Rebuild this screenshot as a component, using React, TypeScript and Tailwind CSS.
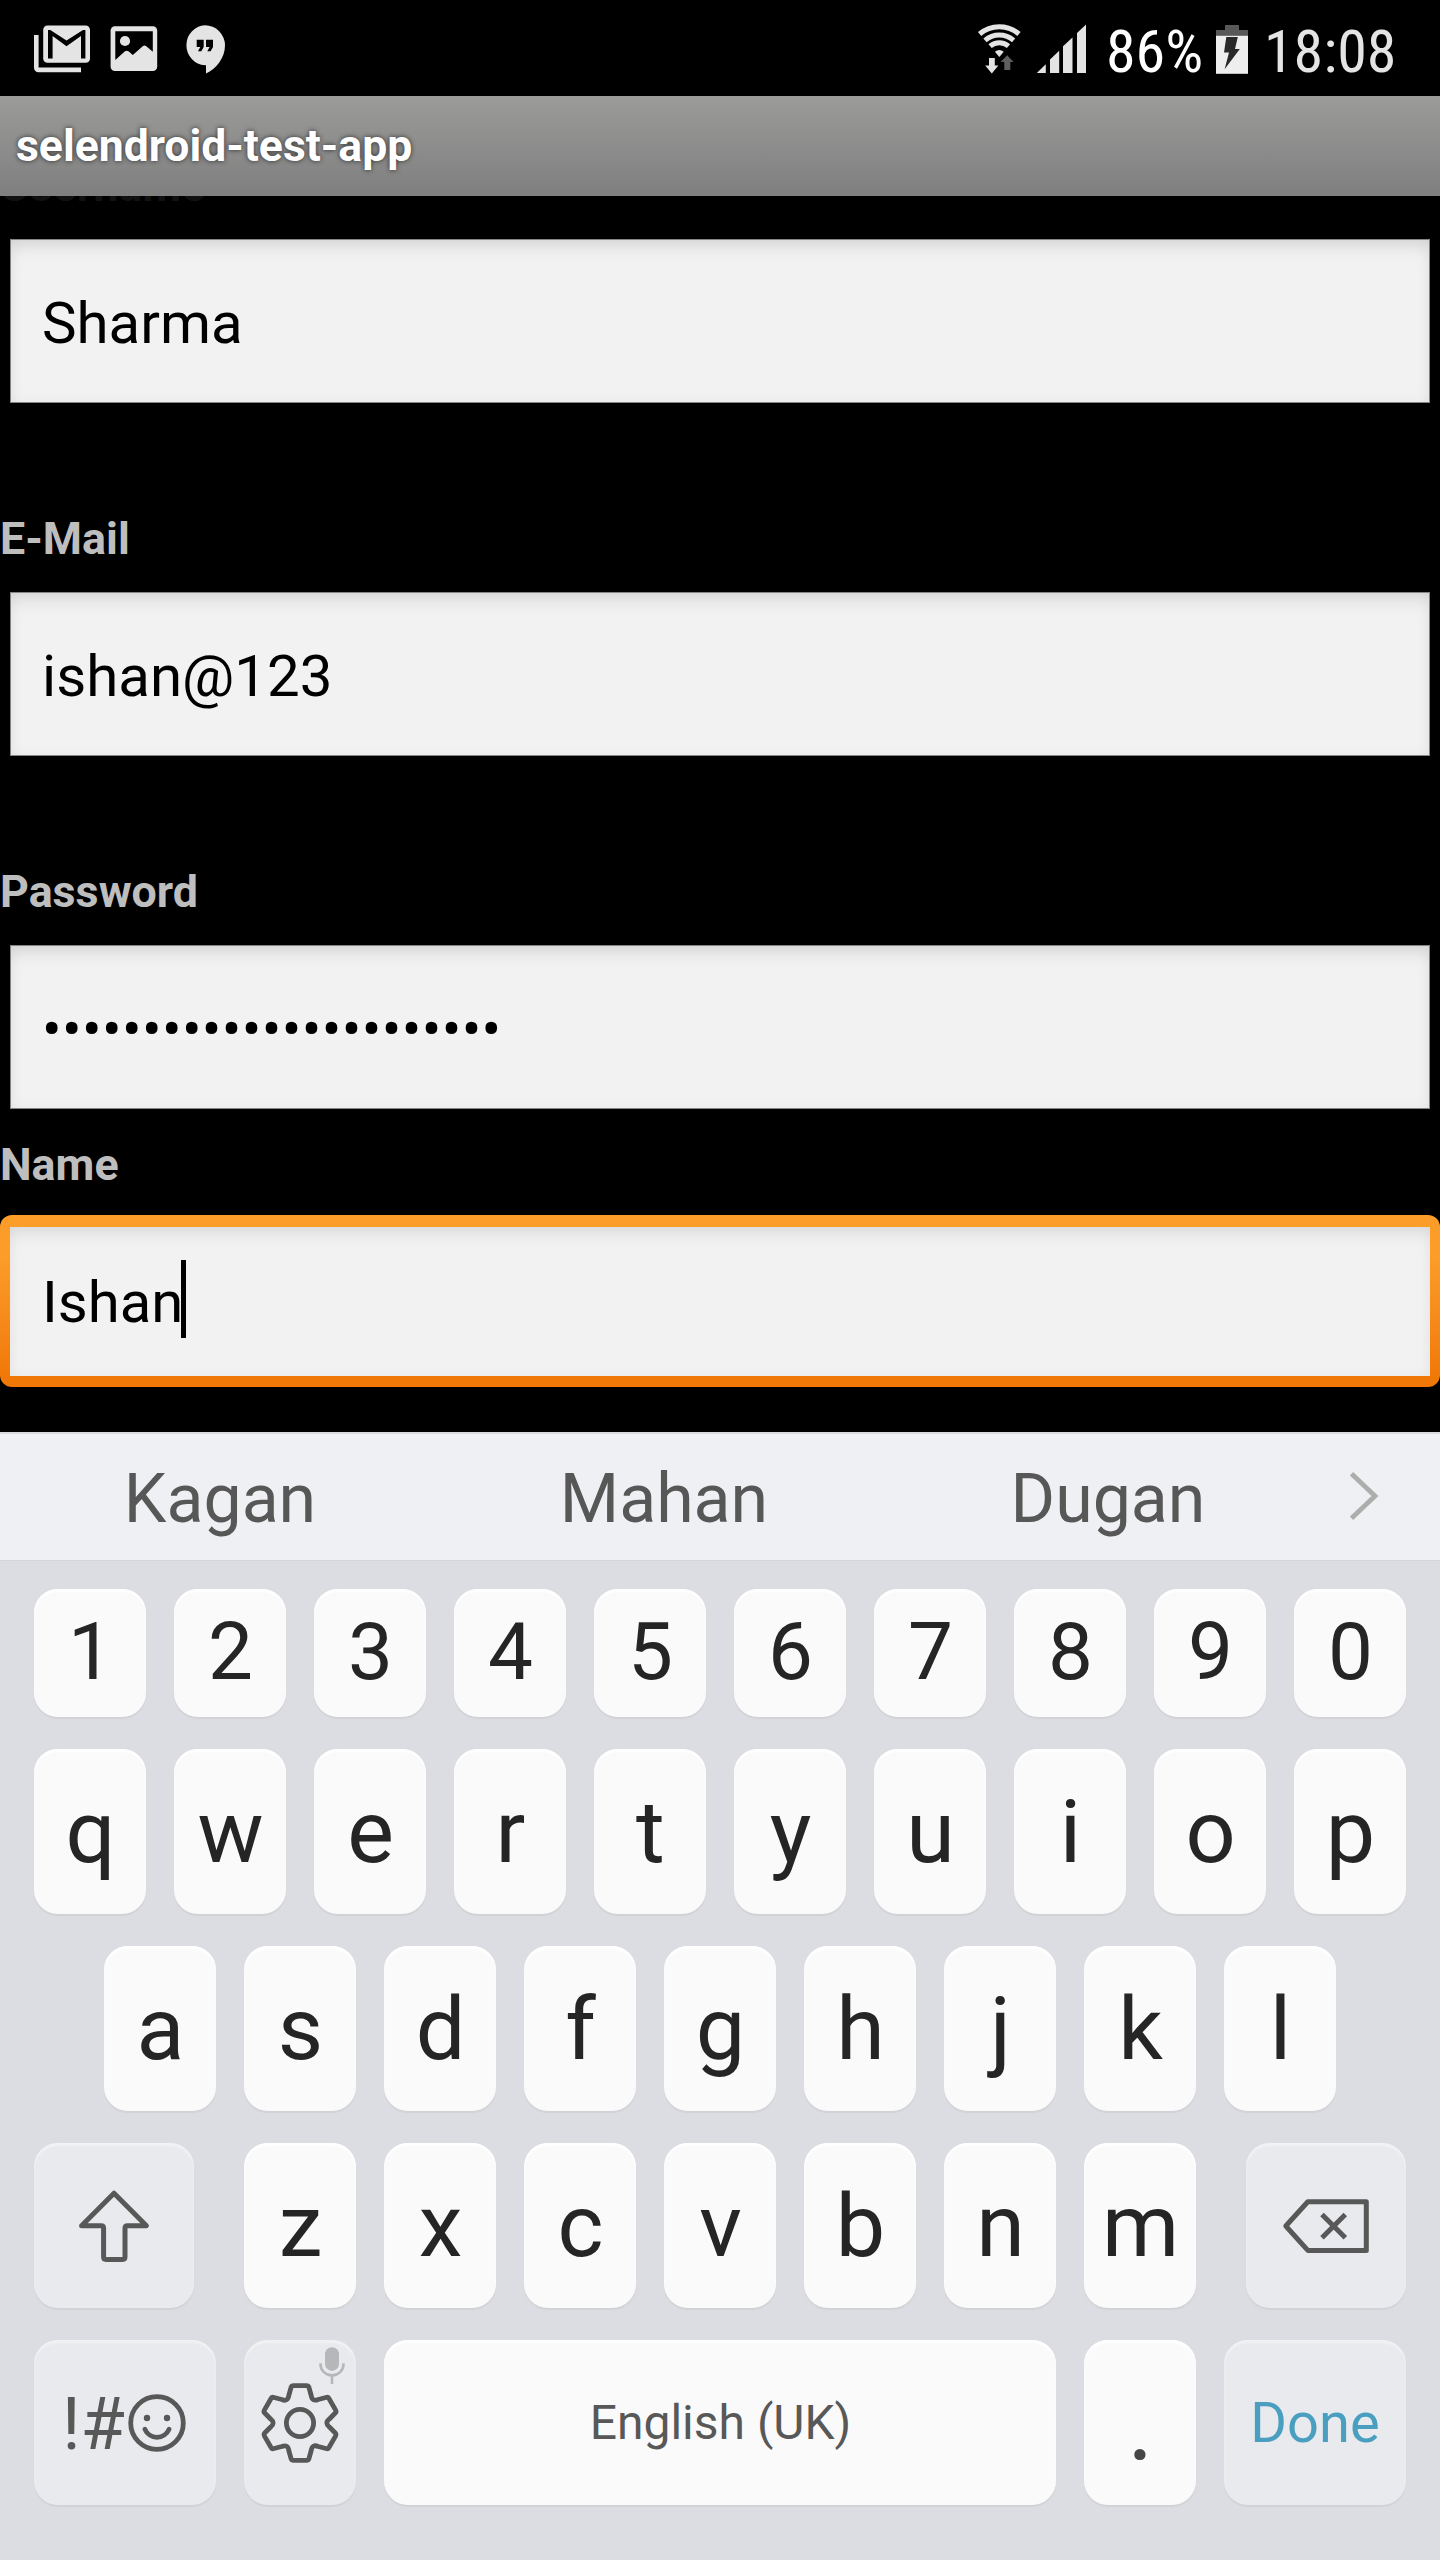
import React from "react";

function GmailIcon() {
  return (
    <svg className="h-24 w-14 shrink-0" viewBox="34 0 56 96">
      <path d="M34 35H38.6V67.6H81V72.2H38.5A4.5 4.5 0 0 1 34 67.7Z" fill="#e4e4e4" />
      <rect x="43.2" y="25.5" width="46.8" height="37.3" rx="4.3" fill="#e4e4e4" />
      <path d="M48 30H50.3L66.5 40.6L83 30H85.4V58.4H81V36L66.5 46.3L52.6 36V58.4H48Z" fill="#000" />
    </svg>
  );
}

function PictureIcon() {
  return (
    <svg className="ml-5 h-24 w-12 shrink-0" viewBox="110 0 48 96">
      <rect x="110.6" y="26.2" width="46.6" height="44.8" rx="4.3" fill="#e4e4e4" />
      <path d="M115.3 31.2H152.8V51.8L146 46Q144.5 44.8 143 46L132.8 55L128.5 51.3Q126.7 50 125 51.3L115.3 60Z" fill="#000" />
      <circle cx="125" cy="41" r="5.1" fill="#e4e4e4" />
    </svg>
  );
}

function HangoutsIcon() {
  return (
    <svg className="ml-[27px] h-24 w-10 shrink-0" viewBox="185 0 40 96">
      <path d="M205 25.3A20 20 0 0 0 205 65.2H206V73.4C216 69 225 58 225 45.3A20 20 0 0 0 205 25.3Z" fill="#e4e4e4" />
      <path d="M196.7 39.7H203.7V47L201.3 51.2H198L200.3 47H196.7ZM206 39.7H213V47L210.6 51.2H207.3L209.6 47H206Z" fill="#000" />
    </svg>
  );
}

function WifiIcon() {
  return (
    <svg className="h-24 w-12 shrink-0" viewBox="976 0 48 96">
      <g fill="none" stroke="#e4e4e4" strokeWidth="5">
        <path d="M979.6 34A30.3 30.3 0 0 1 1019 34" />
        <path d="M985 40.3A22 22 0 0 1 1013.6 40.3" />
        <path d="M990.1 46.2A14.2 14.2 0 0 1 1008.5 46.2" />
      </g>
      <path d="M999.3 57L994.9 51.8A7 7 0 0 1 1003.7 51.8Z" fill="#e4e4e4" />
      <path d="M989 58H994.8V65.6H998.4L991.8 73.4L985.2 65.6H989Z" fill="#e4e4e4" />
      <path d="M1007.2 55.2L1013.6 62H1010.3V70H1004.3V62H1000.6Z" fill="#5f5f5f" />
    </svg>
  );
}

function SignalIcon() {
  return (
    <svg className="ml-3 h-24 w-[50px] shrink-0" viewBox="1036 0 50 96">
      <path
        d="M1036.8 73L1045.8 64.3V73ZM1050 73V59.4L1059.2 50.7V73ZM1063 73V46.2L1072.5 37.6V73ZM1077 73V33L1086 24.5V73Z"
        fill="#e4e4e4"
      />
    </svg>
  );
}

function BatteryIcon() {
  return (
    <svg className="h-24 w-8 shrink-0" viewBox="1216 0 32 96">
      <path d="M1216 30H1225V25H1239V30H1248V36H1216Z" fill="#585858" />
      <rect x="1216" y="35.8" width="32" height="38" fill="#eeeeee" />
      <path d="M1226.3 37H1237.8L1235 49H1239.8L1224.6 69.2L1229 52.4H1224Z" fill="#292929" />
    </svg>
  );
}

function StatusBar() {
  return (
    <div className="flex h-24 shrink-0 bg-black pl-[34px] whitespace-nowrap">
      <GmailIcon />
      <PictureIcon />
      <HangoutsIcon />
      <div className="ml-auto flex w-[464px] font-['Roboto_Condensed',Roboto,sans-serif] text-[60px] leading-[103px]">
        <WifiIcon />
        <SignalIcon />
        <span className="ml-5 w-[110px] shrink-0 text-white">86%</span>
        <BatteryIcon />
        <span className="ml-4 text-[#e4e4e4]">18:08</span>
      </div>
    </div>
  );
}

function Label({ children, className = "" }: { children: React.ReactNode; className?: string }) {
  return <div className={`h-13 text-[44.8px] leading-[52px] font-bold ${className || "text-[#bebebe]"}`}>{children}</div>;
}

function Field({ children }: { children: React.ReactNode }) {
  return (
    <div className="mx-2.5 mt-[27px] h-[164px] border border-[#858585] bg-[#f2f2f2] pt-0.5 pl-[31px] text-[58.2px] leading-[162px] text-black shadow-[inset_0_12px_20px_-8px_rgba(0,0,0,0.13),inset_0_0_14px_rgba(0,0,0,0.04)]">
      {children}
    </div>
  );
}

function Key({ w = "w-28", h = "h-[165px]", func = false, className = "", children }: {
  w?: string; h?: string; func?: boolean; className?: string; children?: React.ReactNode;
}) {
  const tone = func
    ? "bg-[#e9eaee] shadow-[0_2px_1px_#d1d2d6,inset_0_3px_2px_#f1f2f4]"
    : "bg-[#fafafa] pl-px text-[#252525] shadow-[0_2px_1px_#d1d2d6,inset_0_3px_2px_#ffffff]";
  return <div className={`flex shrink-0 justify-center rounded-[24px] ${w} ${h} ${tone} ${className}`}>{children}</div>;
}

function LetterKeys({ keys }: { keys: string }) {
  return <>{keys.split("").map((k) => <Key key={k}><span className="text-[88px] leading-[166px]">{k}</span></Key>)}</>;
}

/* Outline of a six-tooth cog: one tooth turned in steps of 60 degrees. */
function cogPath() {
  const pt = (x: number, y: number, deg: number) => {
    const a = (deg * Math.PI) / 180;
    return `${(56 + x * Math.cos(a) - y * Math.sin(a)).toFixed(2)} ${(83 + x * Math.sin(a) + y * Math.cos(a)).toFixed(2)}`;
  };
  let d = "";
  for (let i = 0; i < 6; i++) {
    const r = i * 60;
    d += `${i ? "" : `M${pt(-11.2, -27.5, 0)}`}L${pt(-8.8, -36.2, r)}Q${pt(-8.4, -37.3, r)} ${pt(-7, -37.3, r)}L${pt(7, -37.3, r)}Q${pt(8.4, -37.3, r)} ${pt(8.8, -36.2, r)}L${pt(11.2, -27.5, r)}Q${pt(12.1, -21, r)} ${pt(-11.2, -27.5, r + 60)}`;
  }
  return d + "Z";
}

function Keyboard() {
  return (
    <div className="h-[1128px] shrink-0 bg-[#dcdde2]">
      <div className="flex h-32 border-t-2 border-[#d9dadb] bg-[#eff0f3] text-[68px] leading-[130px] text-[#575757]">
        <div className="-ml-0.5 grid h-[126px] w-[1332px] grid-cols-3 text-center">
          <span>Kagan</span>
          <span>Mahan</span>
          <span>Dugan</span>
        </div>
        <svg className="mt-[34px] ml-4 h-14 w-10" viewBox="1346 1468 40 56" fill="none" stroke="#adadad" strokeWidth="4.8">
          <path d="M1351.5 1473.8L1375 1496L1351.5 1518.2" />
        </svg>
      </div>
      <div className="flex flex-col gap-8 border-t border-[#d5d6da] px-[34px] pt-7">
        <div className="flex gap-7">
          {"1234567890".split("").map((k) => (
            <Key key={k} h="h-32"><span className="text-[80px] leading-[127px]">{k}</span></Key>
          ))}
        </div>
        <div className="flex gap-7"><LetterKeys keys="qwertyuiop" /></div>
        <div className="flex justify-center gap-7"><LetterKeys keys="asdfghjkl" /></div>
        <div className="flex justify-between">
          <Key w="w-40" func>
            <svg className="h-[165px] w-40" viewBox="0 0 160 165" fill="none" stroke="#585858" strokeWidth="5" strokeLinejoin="round">
              <path d="M80 50.2L112.4 82.7H93.5Q91 82.7 91 85.2V114Q91 116.4 88.6 116.4H72Q69.6 116.4 69.6 114V85.2Q69.6 82.7 67.1 82.7H47.6Z" />
            </svg>
          </Key>
          <div className="flex gap-7"><LetterKeys keys="zxcvbnm" /></div>
          <Key w="w-40" func>
            <svg className="h-[165px] w-40" viewBox="0 0 160 165" fill="none" stroke="#585858" strokeWidth="5" strokeLinejoin="round">
              <path d="M39.8 83L61.8 58.8H120.3V107.4H61.8Z" />
              <path d="M76 71.5L99.3 94.8M99.3 71.5L76 94.8" />
            </svg>
          </Key>
        </div>
        <div className="flex gap-7 text-[#585858]">
          <Key w="w-[182px]" func className="!justify-start pl-7">
            <span className="w-[66px] text-[72px] leading-[169px]">!#</span>
            <svg className="mt-[54px] h-[58px] w-[58px]" viewBox="-29 -29 58 58" fill="none" stroke="#585858" strokeWidth="4.8" strokeLinecap="round">
              <circle r="26.3" />
              <path d="M-12 6.3A13 13 0 0 0 12 6.3" />
              <circle cx="-10" cy="-5" r="3.2" fill="#585858" stroke="none" />
              <circle cx="10" cy="-5" r="3.2" fill="#585858" stroke="none" />
            </svg>
          </Key>
          <Key func>
            <svg className="h-[165px] w-28" viewBox="0 0 112 165" fill="none" stroke="#585858" strokeWidth="4.8" strokeLinejoin="round">
              <path d={cogPath()} />
              <circle cx="56" cy="83" r="13.6" />
              <rect x="81" y="7.3" width="14" height="23.6" rx="7" fill="#b6b7b9" stroke="none" />
              <path d="M76.5 23.3V24.2A11.5 11.2 0 0 0 99.5 24.2V23.3M88 35.5V44" stroke="#b6b7b9" strokeWidth="2.6" />
            </svg>
          </Key>
          <Key w="w-[672px]"><span className="text-[48px] leading-[165px] text-[#585858]">English (UK)</span></Key>
          <Key><span className="text-[100px] leading-[169px] text-[#464646]">.</span></Key>
          <Key w="w-[182px]" func><span className="text-[56px] leading-[166px] text-[#4a9fc0]">Done</span></Key>
        </div>
      </div>
    </div>
  );
}

export default function App() {
  return (
    <div className="flex h-[2560px] w-[1440px] flex-col overflow-hidden bg-black font-[Roboto,sans-serif]">
      <StatusBar />
      <div className="h-25 shrink-0 bg-linear-to-b from-[#9b9b9a] to-[#7f7f7f] pl-4 text-[44.5px] leading-[100px] font-bold text-white [text-shadow:0_0_5px_rgba(0,0,0,0.7)]">
        selendroid-test-app
      </div>
      <div className="h-[1236px] shrink-0 overflow-hidden">
        <div className="-mt-9">
          <Label className="text-[#111111]">Username</Label>
          <Field>Sharma</Field>
        </div>
        <div className="mt-[110px]">
          <Label>E-Mail</Label>
          <Field>ishan@123</Field>
        </div>
        <div className="mt-[110px]">
          <Label>Password</Label>
          <Field><span className="tracking-[0.35px]">•••••••••••••••••••••••</span></Field>
        </div>
        <div className="mt-[30px]">
          <Label>Name</Label>
          <div className="mt-6 h-[172px] rounded-[12px] bg-linear-to-b from-[#fc9c29] from-25% to-[#f07806] to-95% px-2.5 pt-3">
            <div className="flex h-[149px] bg-[#f2f2f2] pl-8 text-[58px] leading-[150px] text-black shadow-[inset_0_12px_20px_-8px_rgba(0,0,0,0.1),inset_0_0_14px_rgba(0,0,0,0.04)]">
              Ishan
              <span className="mt-[33px] -ml-0.5 h-[78px] w-[5px] bg-black" />
            </div>
          </div>
        </div>
      </div>
      <Keyboard />
    </div>
  );
}
